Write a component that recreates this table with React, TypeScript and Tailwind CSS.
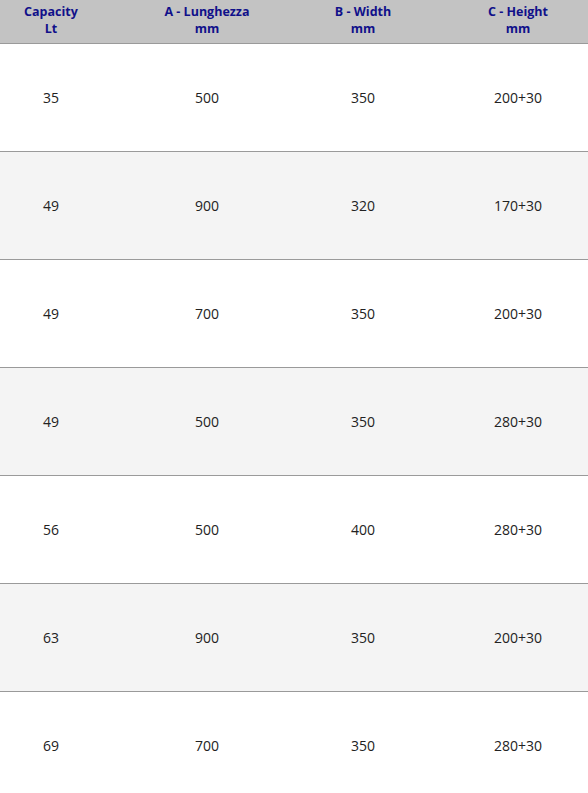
import React from "react";

const rows = [
  ["35", "500", "350", "200+30"],
  ["49", "900", "320", "170+30"],
  ["49", "700", "350", "200+30"],
  ["49", "500", "350", "280+30"],
  ["56", "500", "400", "280+30"],
  ["63", "900", "350", "200+30"],
  ["69", "700", "350", "280+30"],
];

const headers = [
  ["Capacity", "Lt"],
  ["A - Lunghezza", "mm"],
  ["B - Width", "mm"],
  ["C - Height", "mm"],
];

// column template: text centres land at 51 / 207 / 363 / 518
const cols = "grid grid-cols-[129px_156px_156px_147px]";
const cellPad = ["pr-[27px]", "", "", "pl-[7px]"];

export default function App() {
  return (
    <div className="w-[588px] min-h-[793px] bg-white overflow-hidden font-['Open_Sans',sans-serif]">
      {/* header */}
      <div className={`${cols} h-[44px] bg-[#c3c3c3] border-b border-[#9a9a9a] items-start pt-[3px]`}>
        {headers.map((h, i) => (
          <div
            key={i}
            className={`flex flex-col items-center text-[12.5px] font-bold leading-[17px] text-[#10108a] ${cellPad[i]}`}
          >
            <span>{h[0]}</span>
            <span>{h[1]}</span>
          </div>
        ))}
      </div>

      {/* rows */}
      {rows.map((r, ri) => (
        <div
          key={ri}
          className={`${cols} h-[108px] items-center border-b border-[#9a9a9a] ${
            ri % 2 === 1 ? "bg-[#f4f4f4]" : "bg-white"
          }`}
        >
          {r.map((v, ci) => (
            <div key={ci} className={`text-center text-[14px] leading-[18px] text-[#222222] ${cellPad[ci]}`}>
              {v}
            </div>
          ))}
        </div>
      ))}
    </div>
  );
}
